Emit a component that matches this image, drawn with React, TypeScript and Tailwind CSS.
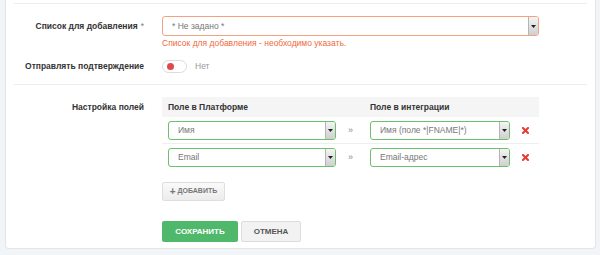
import React from "react";

const font = { fontFamily: '"Liberation Sans", Arial, sans-serif' };

function Arrow() {
  return (
    <div className="w-[10px] h-full flex items-center justify-center bg-gradient-to-b from-[#f4f4f4] to-[#cfcfcf] border-l border-[#b5b5b5]">
      <svg width="5" height="3" viewBox="0 0 5 3">
        <polygon points="0,0 5,0 2.5,3" fill="#222" />
      </svg>
    </div>
  );
}

function Select({ text, w, color }: { text: string; w: string; color: "orange" | "green" }) {
  const border = color === "orange" ? "border-[#f3a27f]" : "border-[#6cbf6c]";
  return (
    <div className={`${w} h-full flex items-stretch border ${border} rounded-[3px] bg-white overflow-hidden`}>
      <div className="flex-1 flex items-center pl-[9px] text-[8.5px] text-[#777] whitespace-nowrap">{text}</div>
      <Arrow />
    </div>
  );
}

function XIcon() {
  return (
    <svg width="7" height="7" viewBox="0 0 7 7">
      <path d="M1 1 L6 6 M6 1 L1 6" stroke="#e53935" strokeWidth="2" strokeLinecap="square" />
    </svg>
  );
}

export default function App() {
  return (
    <div className="w-[600px] h-[255px] bg-[#f2f5f7] overflow-hidden pl-[5px] pr-[4px]" style={font}>
      <div className="h-[249px] bg-white border border-t-0 border-[#e2e6e9] rounded-b-[4px] px-[8px] pt-[3px]">
        {/* section 1 */}
        <div className="border-t border-b border-[#eceeef] pt-[12px] pb-[11px]">
          <div className="flex items-start">
            <div className="w-[130px] h-[20px] flex items-center justify-end text-[8.5px] font-bold text-[#333] whitespace-nowrap">
              Список для добавления <span className="ml-[3px] text-[#777] font-normal">*</span>
            </div>
            <div className="ml-[18px] w-[377px]">
              <div className="h-[20px]">
                <Select text="* Не задано *" w="w-[377px]" color="orange" />
              </div>
              <div className="mt-[1px] text-[8.5px] leading-[12px] text-[#f2693b]">
                Список для добавления - необходимо указать.
              </div>
            </div>
          </div>
          <div className="flex items-center mt-[11px] h-[13px]">
            <div className="w-[130px] flex justify-end text-[8.5px] font-bold text-[#333] whitespace-nowrap">Отправлять подтверждение</div>
            <div className="ml-[18px] flex items-center">
              <div className="w-[25px] h-[13px] rounded-full border border-[#dcdcdc] bg-white flex items-center pl-[4px]">
                <div className="w-[7px] h-[7px] rounded-full bg-[#e0484a]" />
              </div>
              <span className="ml-[8px] text-[8.5px] text-[#999]">Нет</span>
            </div>
          </div>
        </div>
        {/* section 2 */}
        <div className="pt-[12px] flex items-start">
          <div className="w-[130px] h-[20px] flex items-center justify-end text-[8.5px] font-bold text-[#333] whitespace-nowrap">
            Настройка полей
          </div>
          <div className="ml-[18px] w-[377px]">
            <div className="h-[20px] bg-[#f5f5f5] flex items-center text-[8.5px] font-bold text-[#333]">
              <div className="w-[208px] pl-[6px]">Поле в Платформе</div>
              <div>Поле в интеграции</div>
            </div>
            <div className="border-b border-[#eeeeee] pt-[4px] pb-[3px] flex items-center">
              <div className="ml-[6px] h-[19px]">
                <Select text="Имя" w="w-[168px]" color="green" />
              </div>
              <div className="w-[34px] pl-[12px] text-[9px] text-[#888]">»</div>
              <div className="h-[19px]">
                <Select text="Имя (поле *|FNAME|*)" w="w-[140px]" color="green" />
              </div>
              <div className="ml-[12px] flex items-center">
                <XIcon />
              </div>
            </div>
            <div className="pt-[4px] flex items-center">
              <div className="ml-[6px] h-[19px]">
                <Select text="Email" w="w-[168px]" color="green" />
              </div>
              <div className="w-[34px] pl-[12px] text-[9px] text-[#888]">»</div>
              <div className="h-[19px]">
                <Select text="Email-адрес" w="w-[140px]" color="green" />
              </div>
              <div className="ml-[12px] flex items-center">
                <XIcon />
              </div>
            </div>
            <div className="mt-[15px] w-[63px] h-[19px] rounded-[2px] border border-[#dedede] bg-gradient-to-b from-[#fafafa] to-[#ececec] flex items-center justify-center text-[7px] font-bold text-[#777]">
              <span className="text-[10px] leading-none mr-[2px]">+</span>ДОБАВИТЬ
            </div>
            <div className="mt-[20px] flex gap-[3px]">
              <div className="w-[76px] h-[21px] rounded-[2px] bg-[#4fb86b] flex items-center justify-center text-[8px] font-bold text-white">
                СОХРАНИТЬ
              </div>
              <div className="w-[60px] h-[21px] rounded-[2px] border border-[#dcdcdc] bg-[#f2f2f2] flex items-center justify-center text-[8px] font-bold text-[#555]">
                ОТМЕНА
              </div>
            </div>
          </div>
        </div>
      </div>
    </div>
  );
}
